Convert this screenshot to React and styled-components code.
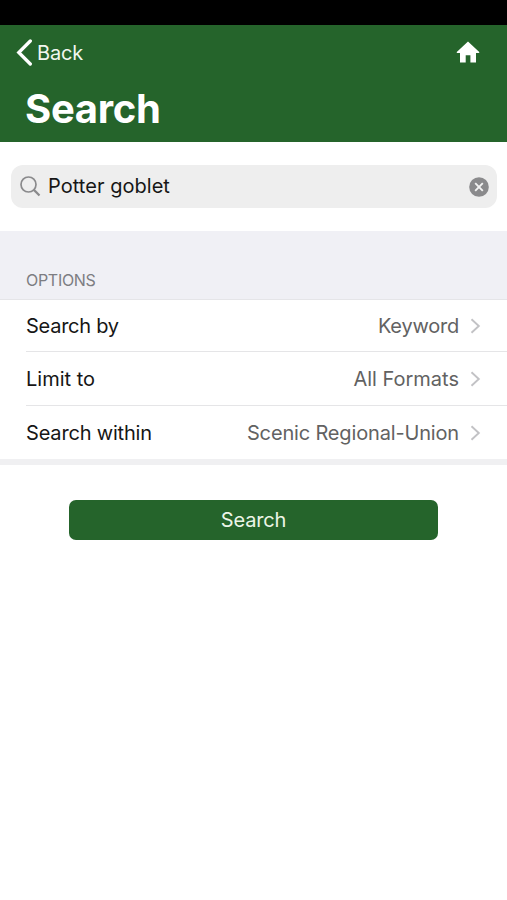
import React, { useState } from "react";
import styled, { createGlobalStyle } from "styled-components";

const GlobalStyle = createGlobalStyle`
  * { box-sizing: border-box; }
  body {
    margin: 0;
    background: #fff;
    font-family: Inter, "Liberation Sans", sans-serif;
    -webkit-font-smoothing: antialiased;
  }
`;

const Screen = styled.div`
  display: flex;
  flex-direction: column;
  height: 900px;
  overflow: hidden;
  background: #fff;
`;

const StatusBar = styled.div`
  height: 25px;
  flex: none;
  background: #000;
`;

const Header = styled.header`
  flex: none;
  height: 117px;
  background: #25642b;
  color: #fff;
`;

const NavBar = styled.nav`
  display: flex;
  align-items: center;
  justify-content: space-between;
  height: 54px;
  padding: 0 27px 0 16px;
`;

const BackButton = styled.button`
  display: flex;
  align-items: center;
  gap: 4px;
  padding: 0;
  border: 0;
  background: none;
  color: #f1f7ef;
  font: 400 20px/26px Inter, sans-serif;
  letter-spacing: -0.2px;
`;

const BackLabel = styled.span`
  padding-top: 2px;
`;

const IconButton = styled.button`
  display: flex;
  padding: 0;
  border: 0;
  background: none;
`;

const Title = styled.h1`
  margin: 5px 0 0 25px;
  font-size: 40px;
  line-height: 50px;
  font-weight: 700;
  letter-spacing: -0.3px;
`;

const SearchArea = styled.div`
  flex: none;
  height: 89px;
  padding: 23px 10px 0 11px;
`;

const Field = styled.label`
  display: flex;
  align-items: center;
  height: 43px;
  padding: 0 8px 0 9px;
  border-radius: 12px;
  background: #eee;
`;

const Query = styled.input`
  flex: 1;
  min-width: 0;
  margin-left: 7px;
  padding: 0 0 2px;
  border: 0;
  outline: 0;
  background: none;
  color: #161616;
  font: 400 20px/26px Inter, sans-serif;
  letter-spacing: 0.04px;
`;

const SectionHeader = styled.h2`
  display: flex;
  align-items: flex-end;
  flex: none;
  height: 68px;
  margin: 0;
  padding: 0 0 9px 26px;
  background: #f0f0f5;
  color: #7d7d82;
  font-size: 16px;
  line-height: 20px;
  font-weight: 400;
  letter-spacing: -0.3px;
`;

const Options = styled.div`
  flex: none;
  border-top: 1px solid #e5e5e8;
  border-bottom: 6px solid #f0f0f2;
`;

const OptionRow = styled.div`
  display: flex;
  align-items: center;
  height: ${(p) => p.$height}px;
  margin-left: 26px;
  padding-right: 26px;
  border-bottom: ${(p) => (p.$last ? "0" : "1px solid #e5e5e7")};
  font-size: 20px;
  line-height: 26px;
`;

const Label = styled.span`
  flex: 1;
  color: #161616;
  letter-spacing: ${(p) => p.$tracking}px;
`;

const Value = styled.span`
  margin-right: 11px;
  color: #626262;
  letter-spacing: ${(p) => p.$tracking}px;
`;

const SubmitButton = styled.button`
  flex: none;
  width: 369px;
  height: 40px;
  margin: 35px 0 0 69px;
  padding: 0;
  border: 0;
  border-radius: 7px;
  background: #25642b;
  color: #ecf5e7;
  font: 400 20px/26px Inter, sans-serif;
  letter-spacing: -0.15px;
`;

const BackIcon = () => (
  <svg width="17" height="28" viewBox="0 0 17 28" fill="none">
    <path
      d="M14.3 3 2.8 14.5 14.3 26"
      stroke="#fff"
      strokeWidth="3.3"
      strokeLinecap="round"
    />
  </svg>
);

const HomeIcon = () => (
  <svg width="24" height="22" viewBox="0 0 24 22">
    <path
      d="M12 .5.5 11.2 1.2 12H4v9.5h5.7v-7.2h4.7v7.2H20V12h2.8l.7-.8z"
      fill="#fff"
    />
  </svg>
);

const SearchIcon = () => (
  <svg width="21" height="21" viewBox="0 0 21 21" fill="none" stroke="#8a8a8c">
    <circle cx="8.5" cy="8.5" r="7.5" strokeWidth="1.7" />
    <path d="m13.9 13.9 5.6 5.6" strokeWidth="2.2" />
  </svg>
);

const ClearIcon = () => (
  <svg width="20" height="20" viewBox="0 0 20 20">
    <circle cx="10" cy="10" r="9.8" fill="#8a8a8c" />
    <path d="m6.2 6.2 7.6 7.6m0-7.6-7.6 7.6" stroke="#f3f3f3" strokeWidth="1.9" />
  </svg>
);

const Chevron = () => (
  <svg width="11" height="16" viewBox="0 0 11 16" fill="none">
    <path d="m1.5 1.2 7.3 6.8-7.3 6.8" stroke="#c2c2c5" strokeWidth="1.9" />
  </svg>
);

const options = [
  { label: "Search by", value: "Keyword", height: 52, labelTracking: -0.25, valueTracking: -0.22 },
  { label: "Limit to", value: "All Formats", height: 54, labelTracking: 0, valueTracking: 0 },
  { label: "Search within", value: "Scenic Regional-Union", height: 53, labelTracking: -0.18, valueTracking: -0.16 },
];

export default function App() {
  const [query, setQuery] = useState("Potter goblet");
  return (
    <Screen>
      <GlobalStyle />
      <StatusBar />
      <Header>
        <NavBar>
          <BackButton>
            <BackIcon />
            <BackLabel>Back</BackLabel>
          </BackButton>
          <IconButton aria-label="Home">
            <HomeIcon />
          </IconButton>
        </NavBar>
        <Title>Search</Title>
      </Header>
      <SearchArea>
        <Field>
          <SearchIcon />
          <Query value={query} onChange={(e) => setQuery(e.target.value)} />
          <IconButton aria-label="Clear" onClick={() => setQuery("")}>
            <ClearIcon />
          </IconButton>
        </Field>
      </SearchArea>
      <SectionHeader>OPTIONS</SectionHeader>
      <Options>
        {options.map((o, i) => (
          <OptionRow key={o.label} $height={o.height} $last={i === options.length - 1}>
            <Label $tracking={o.labelTracking}>{o.label}</Label>
            <Value $tracking={o.valueTracking}>{o.value}</Value>
            <Chevron />
          </OptionRow>
        ))}
      </Options>
      <SubmitButton>Search</SubmitButton>
    </Screen>
  );
}
